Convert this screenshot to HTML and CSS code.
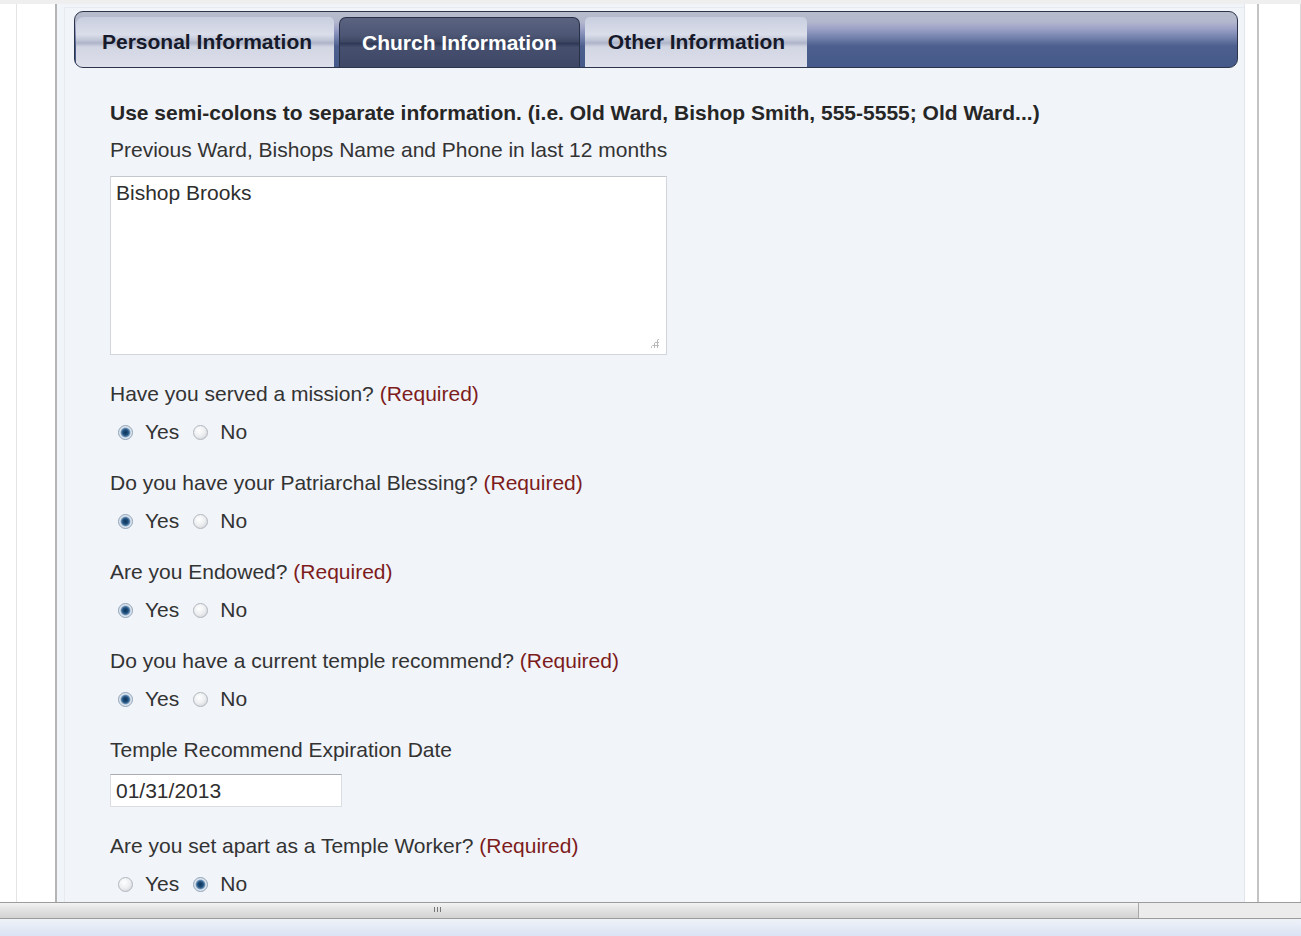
FILE: index.html
```html
<!DOCTYPE html>
<html>
<head>
<meta charset="utf-8">
<title>Church Information</title>
<link rel="stylesheet" href="styles.css">
</head>
<body>
<div class="screen">
  <div class="viewport">
    <div class="gutter g1"></div>
    <div class="gutter g2"></div>
    <div class="panel">
      <div class="panel-inner">
        <div class="tabbar">
          <div class="tab first">Personal Information</div>
          <div class="tab active">Church Information</div>
          <div class="tab last">Other Information</div>
        </div>
        <form class="form">
          <p class="note">Use semi-colons to separate information. (i.e. Old Ward, Bishop Smith, 555-5555; Old Ward...)</p>
          <div class="group">
            <div class="label">Previous Ward, Bishops Name and Phone in last 12 months</div>
            <div class="ta-wrap">
              <textarea class="ta">Bishop Brooks</textarea>
              <span class="grip"></span>
            </div>
          </div>
          <div class="group">
            <div class="label">Have you served a mission? <span class="req">(Required)</span></div>
            <div class="radios"><span class="radio on"></span><span class="opt">Yes</span><span class="radio"></span><span class="opt">No</span></div>
          </div>
          <div class="group">
            <div class="label">Do you have your Patriarchal Blessing? <span class="req">(Required)</span></div>
            <div class="radios"><span class="radio on"></span><span class="opt">Yes</span><span class="radio"></span><span class="opt">No</span></div>
          </div>
          <div class="group">
            <div class="label">Are you Endowed? <span class="req">(Required)</span></div>
            <div class="radios"><span class="radio on"></span><span class="opt">Yes</span><span class="radio"></span><span class="opt">No</span></div>
          </div>
          <div class="group">
            <div class="label">Do you have a current temple recommend? <span class="req">(Required)</span></div>
            <div class="radios"><span class="radio on"></span><span class="opt">Yes</span><span class="radio"></span><span class="opt">No</span></div>
          </div>
          <div class="group">
            <div class="label label-input">Temple Recommend Expiration Date</div>
            <input class="date" type="text" value="01/31/2013">
          </div>
          <div class="group">
            <div class="label">Are you set apart as a Temple Worker? <span class="req">(Required)</span></div>
            <div class="radios"><span class="radio"></span><span class="opt">Yes</span><span class="radio on"></span><span class="opt">No</span></div>
          </div>
        </form>
      </div>
    </div>
    <div class="gutter g3"></div>
    <div class="gutter g4"></div>
  </div>
  <div class="hscroll">
    <div class="thumb"><span class="grip-lines"></span></div>
  </div>
  <div class="statusbar"></div>
</div>
</body>
</html>
```

FILE: styles.css
```css
html, body {
  margin: 0;
  padding: 0;
  background: #ffffff;
}
body {
  font-family: "Liberation Sans", Arial, sans-serif;
  color: #2e2e2e;
}
.screen {
  width: 1301px;
  height: 936px;
  display: flex;
  flex-direction: column;
  overflow: hidden;
}
.viewport {
  height: 902px;
  flex: none;
  display: flex;
  flex-direction: row;
  overflow: hidden;
  border-top: 4px solid #efefef;
  box-sizing: border-box;
}
.gutter {
  background: #ffffff;
  flex: none;
}
.g1 { width: 16px; border-right: 1px solid #e4e4e4; }
.g2 { width: 38px; border-right: 2px solid #b4b4b4; }
.g3 { width: 12px; border-left: 1px solid #e2e6ec; border-right: 2px solid #c4c4c4; }
.g4 { width: 41px; border-right: 1px solid #d8d8d8; }
.panel {
  flex: 1;
  background: #f1f4f9;
  padding: 3px 0 0 7px;
}
.panel-inner {
  height: 100%;
  border-top: 1px solid #e6ebf2;
  border-left: 1px solid #e6ebf2;
  padding: 3px 6px 0 9px;
}
.tabbar {
  height: 55px;
  border: 1px solid #2c344c;
  border-radius: 9px;
  background: linear-gradient(#b8bdcb 0%, #b3b7cd 18%, #9da2c7 30%, #7482ad 46%, #4c5f8e 62%, #45598a 100%);
  display: flex;
  align-items: flex-end;
  gap: 5px;
  padding-left: 1px;
  overflow: hidden;
}
.tab {
  height: 50px;
  line-height: 50px;
  padding: 0 23px;
  font-size: 21px;
  font-weight: bold;
  color: #161a2a;
  background: linear-gradient(#c9cedf 0%, #dadeea 35%, #c2c7d8 46%, #aeb4c9 52%, #d2d6e3 60%, #dde0ea 100%);
  border-radius: 5px 5px 0 0;
  box-sizing: border-box;
}
.tab.first {
  padding-left: 26px;
  padding-right: 22px;
  border-radius: 8px 5px 0 0;
}
.tab.active {
  color: #ffffff;
  background: linear-gradient(#5a6380 0%, #4d5674 35%, #3f4863 48%, #2f3a58 52%, #46506e 60%, #3e4866 100%);
  border: 1px solid #283048;
  border-bottom: none;
  padding: 0 22px;
  border-radius: 7px 7px 0 0;
}
.tab.last {
  padding-right: 22px;
}
.form {
  padding: 33px 0 0 36px;
  margin: 0;
}
.note {
  margin: 0 0 13px;
  font-size: 21px;
  font-weight: bold;
  line-height: 24px;
  color: #262626;
}
.group {
  margin-bottom: 27px;
}
.label {
  font-size: 21px;
  line-height: 24px;
  margin-bottom: 14px;
  color: #333333;
}
.label-input {
  margin-bottom: 12px;
}
.req {
  color: #7d1c1c;
}
.ta-wrap {
  position: relative;
  width: 557px;
  height: 179px;
}
.ta {
  display: block;
  width: 557px;
  height: 179px;
  box-sizing: border-box;
  border: 1px solid #d2d6dc;
  border-top-color: #c4c8ce;
  background: #ffffff;
  font-family: "Liberation Sans", Arial, sans-serif;
  font-size: 21px;
  line-height: 24px;
  color: #2e2e2e;
  padding: 4px 5px;
  resize: none;
  outline: none;
  margin: 0;
}
.grip {
  position: absolute;
  right: 8px;
  bottom: 7px;
  width: 9px;
  height: 10px;
  background:
    radial-gradient(circle, #b8b8b8 1px, transparent 1.2px) 0 0 / 3px 3px;
  clip-path: polygon(100% 0, 100% 100%, 0 100%);
}
.radios {
  display: flex;
  align-items: center;
  height: 24px;
  padding-left: 8px;
  font-size: 21px;
  color: #333333;
}
.radio {
  width: 13px;
  height: 13px;
  border-radius: 50%;
  border: 1px solid #b2b6bd;
  background: radial-gradient(circle at 40% 35%, #ffffff 0%, #eceef0 50%, #c9ccd1 100%);
  box-sizing: content-box;
  margin-right: 12px;
  flex: none;
}
.radio.on {
  border-color: #8ea2b8;
  background: radial-gradient(circle, #0f3459 0%, #1f4f7e 30%, #5d86ad 45%, #d9e2ec 58%, #eef2f6 100%);
}
.opt {
  margin-right: 14px;
}
.date {
  display: block;
  width: 232px;
  height: 33px;
  box-sizing: border-box;
  margin: 0;
  border: 1px solid #dadde2;
  border-top: 1px solid #a9adb3;
  background: #ffffff;
  font-family: "Liberation Sans", Arial, sans-serif;
  font-size: 21px;
  color: #2e2e2e;
  padding: 0 5px;
  outline: none;
}
.hscroll {
  height: 17px;
  flex: none;
  box-sizing: border-box;
  border-top: 1px solid #9c9c9c;
  border-bottom: 1px solid #9c9c9c;
  background: #ececec;
  display: flex;
}
.thumb {
  width: 1139px;
  height: 100%;
  background: linear-gradient(#f3f3f3 0%, #e2e2e2 45%, #d3d3d3 100%);
  border-right: 1px solid #a8a8a8;
  box-sizing: border-box;
  position: relative;
}
.grip-lines {
  position: absolute;
  left: 434px;
  top: 4px;
  width: 5px;
  height: 5px;
  border-left: 1px solid #777;
  border-right: 1px solid #777;
  background: linear-gradient(90deg, transparent 2px, #777 2px, #777 3px, transparent 3px);
}
.statusbar {
  flex: 1;
  background: linear-gradient(#eef2f9, #dbe3f3);
}
```
